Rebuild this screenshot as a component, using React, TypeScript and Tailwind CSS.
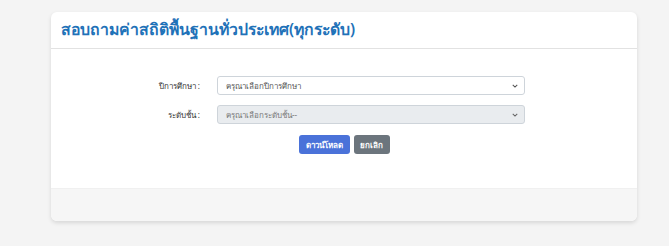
import React from "react";

export default function App() {
  const font = { fontFamily: '"Noto Sans", "Liberation Sans", sans-serif' };
  return (
    <div className="w-[669px] h-[246px] bg-[#f4f4f4] pt-[12px] pl-[51px]" style={font}>
      <div className="w-[586px] h-[209px] bg-white rounded-[6px] shadow-[0_2px_4px_rgba(0,0,0,0.12)] flex flex-col overflow-hidden">
        <div className="h-[37px] border-b border-[#e2e2e2] flex items-center pl-[10px]">
          <h1 className="text-[15.8px] leading-none text-[#1f72b8] font-semibold">สอบถามค่าสถิติพื้นฐานทั่วประเทศ(ทุกระดับ)</h1>
        </div>
        <div className="flex-1 flex flex-col pt-[27px]">
          <div className="flex items-center h-[19px]">
            <label className="w-[166px] shrink-0 text-right text-[8px] text-[#333] pr-[17px]">ปีการศึกษา :</label>
            <div className="w-[308px] h-[19px] border border-[#ced4da] rounded-[3px] flex items-center justify-between pl-[8px] pr-[6px] bg-white">
              <span className="text-[8px] text-[#555]">ครุณาเลือกปีการศึกษา</span>
              <svg width="6" height="4" viewBox="0 0 8 5"><path d="M1 1l3 3 3-3" stroke="#555" strokeWidth="1.4" fill="none" /></svg>
            </div>
          </div>
          <div className="flex items-center h-[19px] mt-[10px]">
            <label className="w-[166px] shrink-0 text-right text-[8px] text-[#333] pr-[17px]">ระดับชั้น :</label>
            <div className="w-[308px] h-[19px] border border-[#ced4da] rounded-[3px] flex items-center justify-between pl-[8px] pr-[6px] bg-[#e9ecef]">
              <span className="text-[8px] text-[#777]">ครุณาเลือกระดับชั้น--</span>
              <svg width="6" height="4" viewBox="0 0 8 5"><path d="M1 1l3 3 3-3" stroke="#666" strokeWidth="1.4" fill="none" /></svg>
            </div>
          </div>
          <div className="flex justify-center gap-[4px] mt-[11px]">
            <button className="w-[51px] h-[19px] bg-[#4a72d9] text-white text-[8px] rounded-[3px] font-semibold">ดาวน์โหลด</button>
            <button className="w-[36px] h-[19px] bg-[#6c757d] text-white text-[8px] rounded-[3px] font-semibold">ยกเลิก</button>
          </div>
        </div>
        <div className="h-[33px] bg-[#f6f6f6] border-t border-[#f0f0f0]"></div>
      </div>
    </div>
  );
}
